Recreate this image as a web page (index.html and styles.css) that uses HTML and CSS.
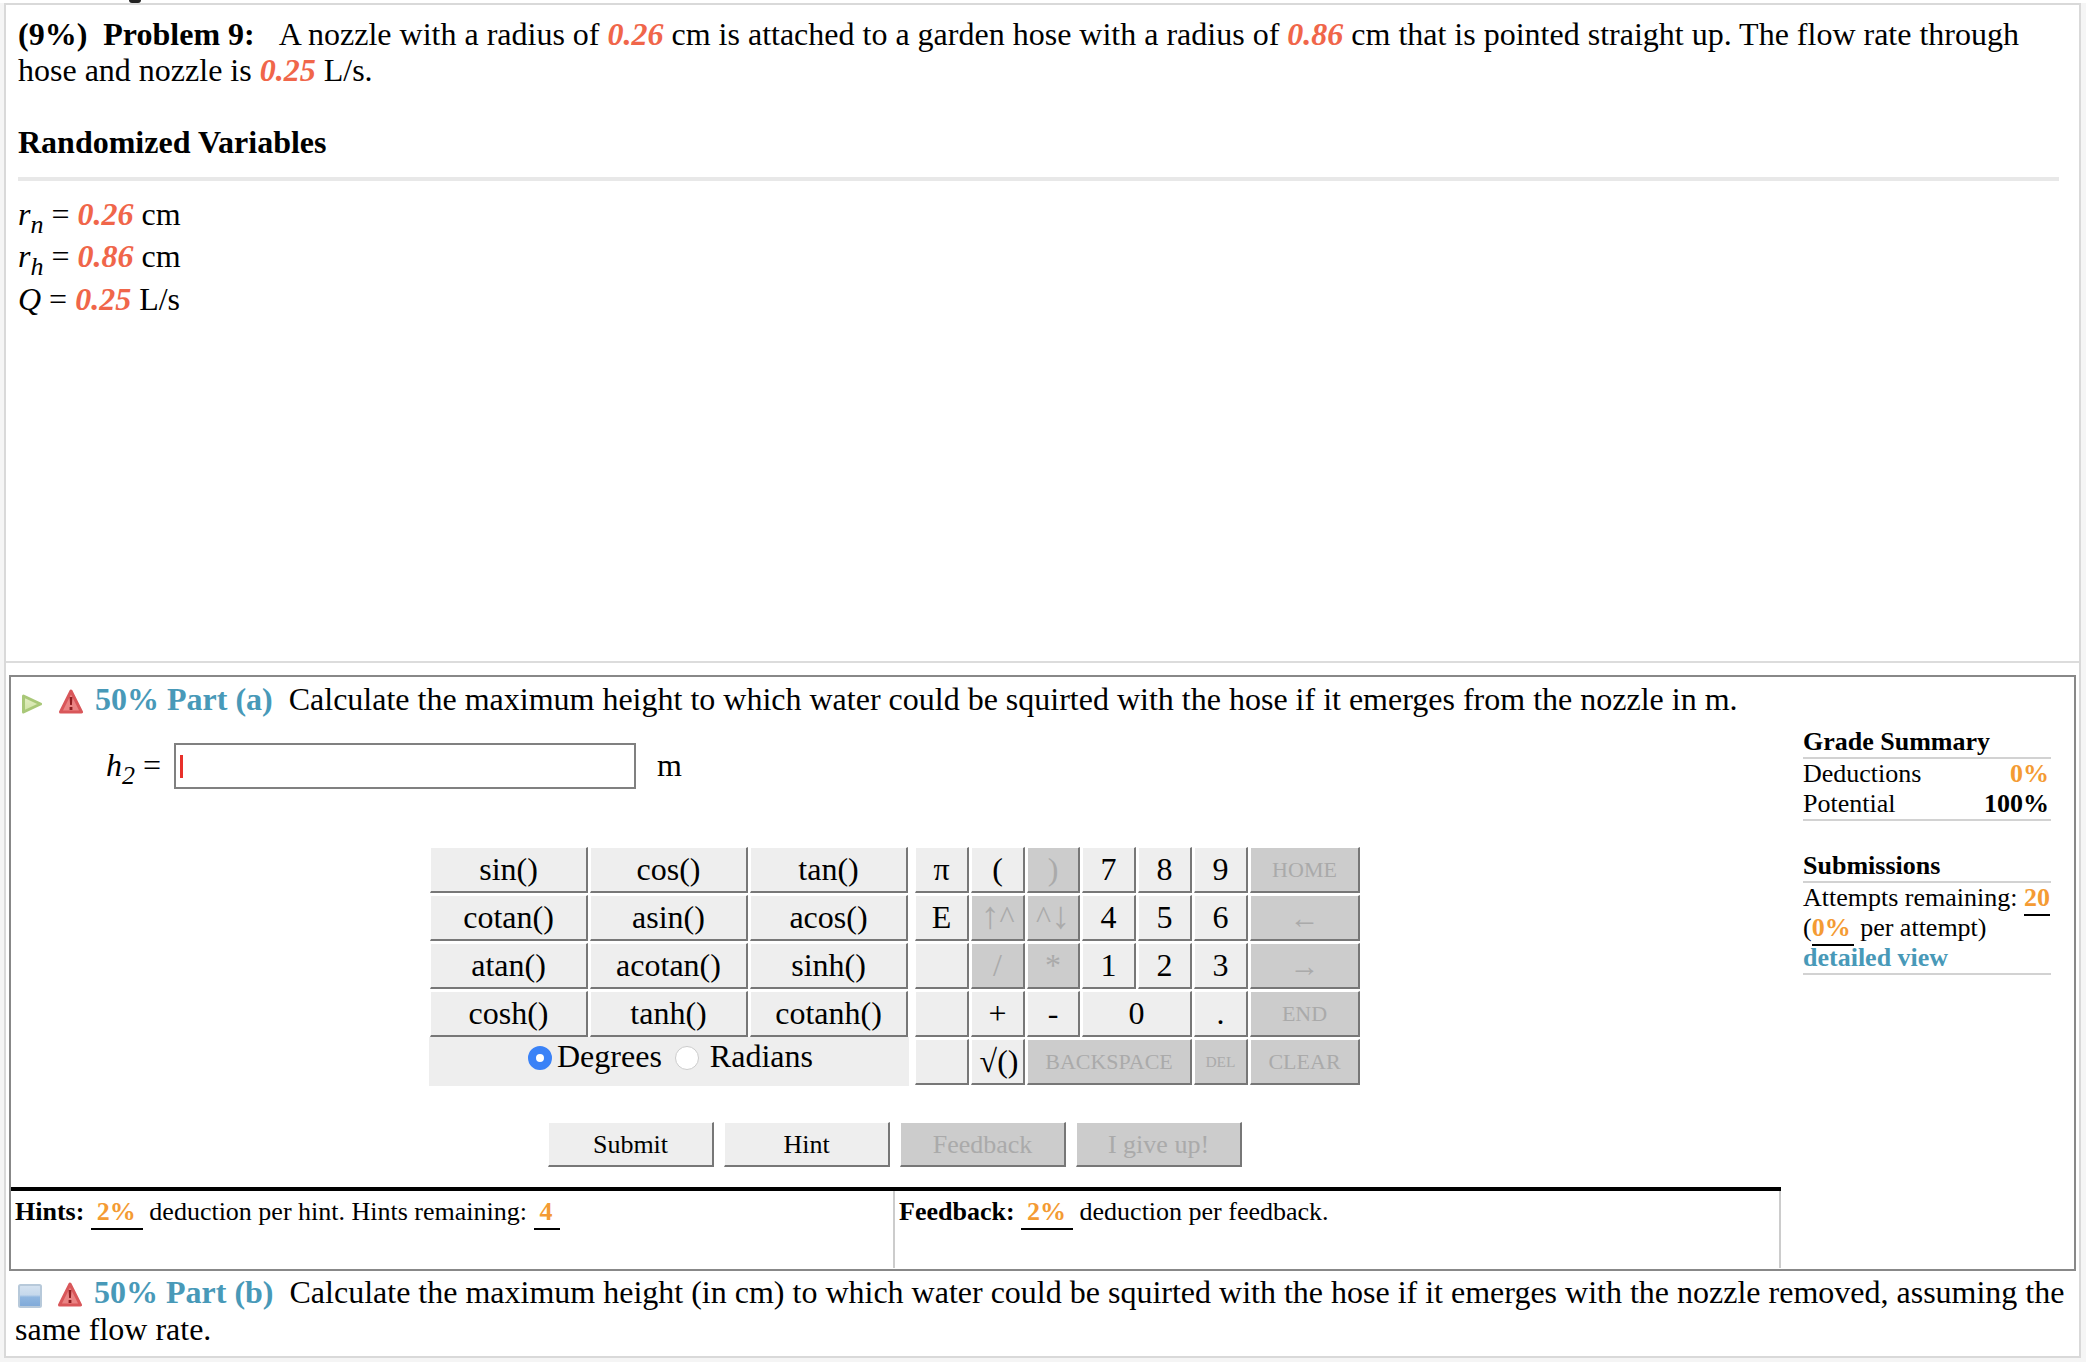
FILE: index.html
```html
<!DOCTYPE html>
<html lang="en">
<head>
<meta charset="utf-8">
<title>Problem 9</title>
<link rel="stylesheet" href="styles.css">
</head>
<body>
<div class="top-strip"><span class="cut-glyph"></span></div>
<main class="sheet">
  <section class="problem">
    <p class="statement"><strong class="pct-head">(9%)</strong><strong class="prob-head">Problem 9:</strong>A nozzle with a radius of <em class="val">0.26</em> cm is attached to a garden hose with a radius of <em class="val">0.86</em> cm that is pointed straight up. The flow rate through hose and nozzle is <em class="val">0.25</em> L/s.</p>
    <h2 class="rv-title">Randomized Variables</h2>
    <hr class="rv-rule">
    <div class="var"><i>r<sub>n</sub></i> = <em class="val">0.26</em> cm</div>
    <div class="var"><i>r<sub>h</sub></i> = <em class="val">0.86</em> cm</div>
    <div class="var"><i>Q</i> = <em class="val">0.25</em> L/s</div>
  </section>

  <section class="part-box">
    <div class="part-head">
      <svg class="ico-play" viewBox="0 0 22 22" width="22" height="22"><defs><linearGradient id="pg" x1="0" y1="0" x2="0" y2="1"><stop offset="0" stop-color="#e4eec4"/><stop offset="1" stop-color="#cfe3a4"/></linearGradient></defs><path d="M2.5 3 L19.5 11 L2.5 19 Z" fill="url(#pg)" stroke="#a9c878" stroke-width="3" stroke-linejoin="round"/></svg>
      <svg class="ico-warn" viewBox="0 0 24 26" width="24" height="26"><path d="M12 2 L22.5 23 H1.5 Z" fill="#ea8484" stroke="#d9575a" stroke-width="3" stroke-linejoin="round"/><path d="M10.6 8 H13.4 L12.9 16 H11.1 Z M10.6 18 H13.4 V21 H10.6 Z" fill="#8e1d20"/></svg>
      <strong class="part-label">50% Part (a)</strong>
      <span class="part-text">Calculate the maximum height to which water could be squirted with the hose if it emerges from the nozzle in m.</span>
    </div>
    <div class="part-body">
      <div class="part-main">
        <div class="answer">
          <span class="answer-name"><i>h<sub>2</sub></i> =</span>
          <div class="answer-input"><span class="caret"></span></div>
          <span class="answer-unit">m</span>
        </div>
        <div class="keypad">
          <div class="fn-keys">
            <button class="key">sin()</button><button class="key">cos()</button><button class="key">tan()</button>
            <button class="key">cotan()</button><button class="key">asin()</button><button class="key">acos()</button>
            <button class="key">atan()</button><button class="key">acotan()</button><button class="key">sinh()</button>
            <button class="key">cosh()</button><button class="key">tanh()</button><button class="key">cotanh()</button>
            <div class="angle-row">
              <input class="radio" type="radio" name="angle" checked><span class="deg">Degrees</span>
              <input class="radio" type="radio" name="angle"><span class="rad">Radians</span>
            </div>
          </div>
          <div class="num-keys">
            <button class="key">π</button><button class="key">(</button><button class="key off">)</button><button class="key">7</button><button class="key">8</button><button class="key">9</button><button class="key off small">HOME</button>
            <button class="key">E</button><button class="key off"><span class="tall">↑</span>^</button><button class="key off">^<span class="tall">↓</span></button><button class="key">4</button><button class="key">5</button><button class="key">6</button><button class="key off arrow">←</button>
            <button class="key"></button><button class="key off">/</button><button class="key off">*</button><button class="key">1</button><button class="key">2</button><button class="key">3</button><button class="key off arrow">→</button>
            <button class="key"></button><button class="key">+</button><button class="key">-</button><button class="key span2">0</button><button class="key">.</button><button class="key off small">END</button>
            <button class="key"></button><button class="key root">√()</button><button class="key off small span3">BACKSPACE</button><button class="key off tiny">DEL</button><button class="key off small">CLEAR</button>
          </div>
        </div>
        <div class="actions">
          <button class="key act">Submit</button>
          <button class="key act">Hint</button>
          <button class="key act off">Feedback</button>
          <button class="key act off">I give up!</button>
        </div>
        <div class="help">
          <div class="help-col hints"><strong>Hints:</strong> <b class="mark">2%</b> deduction per hint. Hints remaining: <b class="mark">4</b></div>
          <div class="help-col feedback"><strong>Feedback:</strong> <b class="mark">2%</b> deduction per feedback.</div>
        </div>
      </div>
      <aside class="side">
        <div class="side-title">Grade Summary</div>
        <div class="side-row"><span>Deductions</span><b class="orange">0%</b></div>
        <div class="side-row ruled"><span>Potential</span><b>100%</b></div>
        <div class="side-title second">Submissions</div>
        <div class="side-line">Attempts remaining: <b class="mark flush">20</b></div>
        <div class="side-line">(<b class="mark flush-l">0%</b> per attempt)</div>
        <div class="side-line ruled"><a class="detail" href="#">detailed view</a></div>
      </aside>
    </div>
  </section>

  <section class="part-b">
    <svg class="ico-box" viewBox="0 0 24 24" width="24" height="24"><defs><linearGradient id="bg" x1="0" y1="0" x2="0" y2="1"><stop offset="0" stop-color="#d6e3f1"/><stop offset=".45" stop-color="#c5d8ec"/><stop offset=".55" stop-color="#8fb6e0"/><stop offset="1" stop-color="#7fa9d8"/></linearGradient></defs><rect x="1" y="1" width="22" height="22" rx="1.5" fill="url(#bg)" stroke="#b7c9da" stroke-width="2"/></svg>
    <svg class="ico-warn" viewBox="0 0 24 26" width="24" height="26"><path d="M12 2 L22.5 23 H1.5 Z" fill="#ea8484" stroke="#d9575a" stroke-width="3" stroke-linejoin="round"/><path d="M10.6 8 H13.4 L12.9 16 H11.1 Z M10.6 18 H13.4 V21 H10.6 Z" fill="#8e1d20"/></svg>
    <strong class="part-label">50% Part (b)</strong>
    <span class="part-text">Calculate the maximum height (in cm) to which water could be squirted with the hose if it emerges with the nozzle removed, assuming the same flow rate.</span>
  </section>
</main>
</body>
</html>
```

FILE: styles.css
```css
* { box-sizing: border-box; }
html, body { margin: 0; padding: 0; }
body {
  width: 2086px;
  height: 1362px;
  overflow: hidden;
  background: #f5f5f5;
  font-family: "Liberation Serif", "Times New Roman", serif;
  color: #000;
  font-size: 32px;
}
.top-strip { height: 3px; background: #fff; padding-left: 129px; overflow: hidden; }
.cut-glyph { display: block; width: 12px; height: 3px; background: #222; border-radius: 0 0 6px 6px; }

.sheet {
  margin: 0 5px 0 4px;
  height: 1355px;
  border: 2px solid #d9d9d9;
  background: #fff;
  overflow: hidden;
}

.problem { height: 658px; padding: 11px 12px 0 12px; border-bottom: 2px solid #dcdcdc; }
.statement { margin: 0; line-height: 36px; width: 2040px; }
.pct-head { margin-right: 16px; }
.prob-head { margin-right: 24px; }
.val { color: #f0664a; font-style: italic; font-weight: bold; }
.rv-title { margin: 36px 0 0; font-size: 32px; line-height: 36.5px; font-weight: bold; }
.rv-rule { margin: 16px 0 12px; width: 2041px; border: 0; height: 4px; background: #e8e8e8; }
.var { line-height: 42.5px; }
.var sub { font-size: 26px; line-height: 0; vertical-align: -8px; }

.part-box { margin: 12px 3px 0; height: 596px; border: 2px solid #888; }
.part-head { height: 48px; padding: 4px 0 0 10px; line-height: 37px; white-space: nowrap; }
.part-head svg, .part-b svg { vertical-align: -5px; filter: blur(0.4px); }
.ico-play { margin-right: 8px; }
.ico-warn { margin-right: 4px; }
.part-label { color: #4899b8; margin-right: 8px; }

.part-body { display: flex; }
.part-main { width: 1770px; flex: none; }
.answer { display: flex; align-items: center; height: 46px; margin-top: 18px; padding-left: 95px; }
.answer-name { width: 68px; flex: none; padding-bottom: 2px; }
.answer-name sub { font-size: 26px; line-height: 0; vertical-align: -8px; }
.answer-input { width: 462px; height: 46px; border: 2px solid #808080; display: flex; align-items: center; padding-left: 4px; }
.caret { width: 3px; height: 23px; background: #e8302a; }
.answer-unit { margin-left: 21px; padding-bottom: 2px; }

.keypad { display: flex; gap: 7px; margin: 58px 0 0 419px; }
.fn-keys { display: grid; grid-template-columns: repeat(3, 158px); grid-auto-rows: 46px; gap: 2px; align-content: start; }
.num-keys { display: grid; grid-template-columns: 54px 54px 53px 54px 54px 54px 110px; grid-auto-rows: 46px; gap: 2px; }
.key {
  margin: 0;
  padding: 0;
  background: #eee;
  color: #000;
  font: 32px "Liberation Serif", "Times New Roman", serif;
  border-style: solid;
  border-width: 1px 2px 2px 1px;
  border-color: #fff #777 #777 #fff;
  border-radius: 0;
  overflow: hidden;
}
.off { background: #ccc; color: #aaa; }
.small { font-size: 22px; }
.arrow { font-size: 30px; }
.tiny { font-size: 15.5px; }
.tall { font-size: 38px; line-height: 0; }
.root { padding-left: 3px; white-space: nowrap; }
.span2 { grid-column: span 2; }
.span3 { grid-column: span 3; }
.angle-row {
  grid-column: 1 / -1;
  margin: -2px -1px 0;
  height: 49px;
  background: #eee;
  display: flex;
  align-items: flex-start;
  padding: 0 0 0 99px;
  line-height: 38px;
}
.radio { appearance: none; margin: 9px 0 0; width: 24px; height: 24px; border-radius: 50%; border: 1px solid #ccc; background: #fff; flex: none; }
.radio:checked { border: 8px solid #3a82f7; }
.deg { margin-left: 5px; }
.angle-row .radio + .deg + .radio { margin-left: 13px; }
.rad { margin-left: 11px; }

.actions { display: flex; gap: 10px; margin: 37px 0 0 537px; }
.act { width: 166px; height: 45px; font-size: 26px; padding-top: 2px; }

.help { display: flex; margin-top: 20px; height: 81px; border-top: 4px solid #000; font-size: 26px; line-height: 33px; }
.help-col { height: 77px; padding-top: 4px; border-right: 2px solid #ccc; }
.hints { width: 884px; padding-left: 4px; }
.feedback { flex: 1; padding-left: 4px; }
.mark { color: #f49b33; padding: 0 7px 2px 6px; border-bottom: 2px solid #000; }

.side { flex: 1; padding-left: 22px; font-size: 26px; line-height: 30px; width: 270px; }
.side-title { font-weight: bold; width: 248px; padding-top: 2px; border-bottom: 2px solid #d2d2d2; }
.side-title.second { margin-top: 28px; }
.side-row { display: flex; justify-content: space-between; width: 248px; padding-right: 2px; }
.side-line { width: 248px; }
.ruled { border-bottom: 2px solid #d2d2d2; padding-bottom: 0; }
.orange { color: #f49b33; }
.mark.flush { padding: 0 0 2px; }
.mark.flush-l { padding: 0 3px 2px 0; }
.detail { color: #4899b8; font-weight: bold; text-decoration: none; }

.part-b { padding: 3px 10px 0 9px; line-height: 37px; }
.ico-box { margin-left: 3px; margin-right: 8px; }
```
